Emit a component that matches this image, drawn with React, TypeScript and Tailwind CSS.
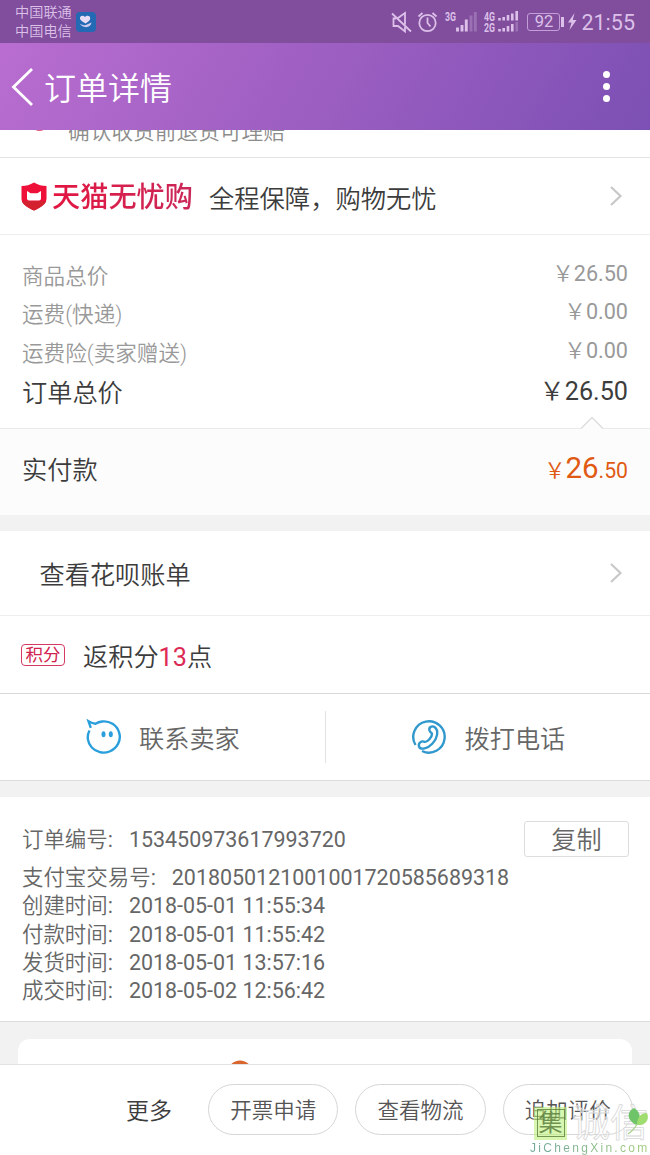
/**
 * 订单详情页
 * 状态栏 + 标题栏 + 订单内容 + 底部操作栏
 */

const prices = [
  { label: '商品总价', value: '26.50' },
  { label: '运费(快递)', value: '0.00' },
  { label: '运费险(卖家赠送)', value: '0.00' },
]

const orderInfo = [
  { label: '支付宝交易号', value: '2018050121001001720585689318' },
  { label: '创建时间', value: '2018-05-01 11:55:34' },
  { label: '付款时间', value: '2018-05-01 11:55:42' },
  { label: '发货时间', value: '2018-05-01 13:57:16' },
  { label: '成交时间', value: '2018-05-02 12:56:42' },
]

const actions = ['开票申请', '查看物流', '追加评价']

export default function App() {
  return (
    <div className="relative flex h-[1155px] w-[650px] flex-col overflow-hidden bg-[#f2f2f2] font-['Roboto','Noto_Sans_CJK_SC',sans-serif] font-[350] text-[#3c3c3c]">
      <StatusBar />
      <TitleBar />
      <div className="flex h-7 shrink-0 items-start overflow-hidden border-b border-[#e4e4e4] bg-white pl-[34px]">
        <span className="-mt-2 h-[9px] w-[11px] shrink-0 rounded-full bg-[#e8617c]" />
        <span className="-mt-[13px] ml-[23px] text-[21.7px] leading-[30px] text-[#8c8c8c]">确认收货前退货可理赔</span>
      </div>
      <GuaranteeRow />
      <PriceSection />
      <div className="mt-4 flex h-[85px] shrink-0 items-center justify-between border-b border-[#eee] bg-white pr-[27px] pl-[39.5px]">
        <span className="mt-[5px] text-[25.2px]">查看花呗账单</span>
        <ChevronRight />
      </div>
      <div className="flex h-[78px] shrink-0 items-center border-b border-[#d8d8d8] bg-white pl-[21px]">
        <span className="flex h-[22px] w-11 items-center justify-center rounded-[4px] border border-[#d43a62] pt-[2px] text-[17.5px] font-normal text-[#d1234f]">
          积分
        </span>
        <span className="mt-[6px] ml-[18px] text-[25.2px]">
          返积分<span className="font-normal text-[#dd2a55]">13</span>点
        </span>
      </div>
      <ContactSection />
      <OrderInfoSection />
      <div className="flex h-[42px] shrink-0 items-end px-[18px]">
        <div className="flex h-[25px] flex-1 items-end overflow-hidden rounded-t-xl bg-white pl-[211px]">
          <svg width="22" height="4" viewBox="0 0 22 4">
            <circle cx="11" cy="13" r="12.5" fill="#d9662e" />
          </svg>
        </div>
      </div>
      <ActionBar />
      <Watermark />
    </div>
  )
}

/**
 * 系统状态栏
 */
function StatusBar() {
  return (
    <div className="flex h-[43px] shrink-0 items-center bg-[#804e9c] pr-[15px] pl-[15px] text-[#dcc0ea]">
      <div className="flex flex-col pt-[1px] text-[14.2px] leading-[19.5px]">
        <span>中国联通</span>
        <span>中国电信</span>
      </div>
      <svg className="ml-1" width="20" height="20" viewBox="0 0 20 20">
        <rect width="20" height="20" rx="4" fill="#2469b4" />
        <path d="M9.5 11.5C5 9 3.8 7.5 4 5.8C4.3 3.5 7.3 3 9 5C10.5 3 14 3.4 14.2 6C14.3 8 13 9.5 9.5 11.5Z" fill="#e6dcf5" />
        <path d="M3.5 11.5C6 13 9 14 11 12.5L15.5 10.5C15 14 11.5 16 8 14.8C6 14 4.5 13 3.5 11.5Z" fill="#cfcbee" />
      </svg>
      <div className="ml-auto flex items-center">
        <svg width="128" height="24" viewBox="0 0 128 24" fill="none" stroke="#dcc0ea" strokeWidth="1.8">
          {/* 静音 */}
          <path d="M1 3.5L20 21.5M7 8L14 3V14.5M5 8.5H2.5V16H7L14 21.5V17" />
          {/* 闹钟 */}
          <circle cx="36.5" cy="13" r="8.2" />
          <path d="M36.5 7.5V13L39.5 16.5M27.5 6.5L31.5 3M41.5 3L45.5 6.5" />
          {/* 信号 */}
          <g strokeWidth="2.9">
            <path d="M66.5 17.5V21.5M71 15V21.5M75.3 9.5V21.5" />
            <path d="M80 5.5V21.5M84.3 2V21.5" opacity=".3" />
          </g>
          <g strokeWidth="2.6">
            <path d="M108.5 8V10.5M112.7 7V10.5M117 5V10.5M121.3 3.5V10.5M125.7 1V10.5" />
            <path d="M108.5 19V21.5M112.7 18V21.5M117 16V21.5M121.3 14V21.5" />
            <path d="M125.7 12V21.5" opacity=".3" />
          </g>
          <g fill="#dcc0ea" stroke="none" fontSize="12" fontWeight="700" fontFamily="Roboto">
            <text x="54" y="10.5" textLength="11" lengthAdjust="spacingAndGlyphs">3G</text>
            <text x="93" y="10.5" textLength="11" lengthAdjust="spacingAndGlyphs">4G</text>
            <text x="93" y="21.5" textLength="11" lengthAdjust="spacingAndGlyphs">2G</text>
          </g>
        </svg>
        <div className="ml-2 flex h-[18px] w-[33px] items-center justify-center rounded-[3px] border border-[#c39ed8] pt-[2px] text-[16.5px] font-normal">92</div>
        <span className="ml-[1px] h-[10px] w-[3px] bg-[#dcc0ea]" />
        <svg className="ml-1" width="9" height="19" viewBox="0 0 9 19" fill="#dcc0ea">
          <path d="M6.5 1L0 10.5H3.5L1.5 18L8.5 8H4.8Z" />
        </svg>
        <span className="mt-[3px] ml-1 text-[21.5px] font-normal">21:55</span>
      </div>
    </div>
  )
}

function TitleBar() {
  return (
    <div className="flex h-[87px] shrink-0 items-center bg-[linear-gradient(120deg,#b96dd0_0%,#9c5ec1_50%,#7c50b4_100%)] pr-10 pl-[11px] text-white">
      <svg width="24" height="40" viewBox="0 0 24 40" fill="none" stroke="currentColor" strokeWidth="2.8">
        <path d="M21 2L2.5 20L21 38" />
      </svg>
      <h1 className="mt-[4px] ml-[9px] text-[32px] font-[350]">订单详情</h1>
      <div className="ml-auto flex flex-col gap-[5px]">
        <span className="size-[7px] rounded-full bg-white" />
        <span className="size-[7px] rounded-full bg-white" />
        <span className="size-[7px] rounded-full bg-white" />
      </div>
    </div>
  )
}

function ChevronRight() {
  return (
    <svg width="14" height="22" viewBox="0 0 14 22" fill="none" stroke="#c8c8c8" strokeWidth="2.2">
      <path d="M2 2L11.5 11L2 20" />
    </svg>
  )
}

/**
 * 天猫无忧购
 */
function GuaranteeRow() {
  return (
    <div className="flex h-[77px] shrink-0 items-center border-b border-[#eee] bg-white pr-[27px] pl-[21px]">
      <svg width="26" height="29" viewBox="0 0 26 29">
        <path d="M13 .5C17 3 21 4 25.5 4V17C25.5 22 18 26.500 13 28.500C8 26.500 .5 22 .5 17V4C5 4 9 3 13 .5Z" fill="#ee1038" />
        <path d="M.8 19H25.200C24 23 17.500 26.700 13 28.500C8.500 26.700 2 23 .8 19Z" fill="#d3212f" />
        <path d="M6 9C8 10.200 9 11.300 10 11.300H16C17 11.300 18 10.200 20 9V16.500Q20 18.500 18 18.500H8Q6 18.500 6 16.500Z" fill="#fff" />
      </svg>
      <span className="mt-[4px] ml-[5px] bg-linear-to-r from-[#e31440] to-[#c92758] bg-clip-text text-[28.2px] font-medium text-transparent">天猫无忧购</span>
      <span className="mt-[7px] ml-[16px] text-[25.3px]">全程保障，购物无忧</span>
      <span className="ml-auto">
        <ChevronRight />
      </span>
    </div>
  )
}

/**
 * 价格明细与实付款
 */
function PriceSection() {
  return (
    <>
      <div className="flex h-[193px] shrink-0 flex-col bg-white px-[22px] pt-[20px]">
        {prices.map((item) => (
          <div key={item.label} className="flex h-[38.5px] items-center justify-between text-[21.6px] text-[#999]">
            <span className="mt-[5px]">{item.label}</span>
            <span className="-mt-[1px]">
              ￥<span className="font-normal">{item.value}</span>
            </span>
          </div>
        ))}
        <div className="flex h-[42px] items-center justify-between text-[25.2px]">
          <span className="mt-[5px]">订单总价</span>
          <span>
            ￥<span className="font-normal">26.50</span>
          </span>
        </div>
      </div>
      <div className="relative flex h-[87px] shrink-0 items-center justify-between border-t border-[#e9e9e9] bg-[#fcfcfc] px-[22px]">
        <svg className="absolute -top-[13px] left-[580px]" width="24" height="14" viewBox="0 0 24 14">
          <path d="M1 13L12 1.5L23 13V14H1Z" fill="#fcfcfc" />
          <path d="M1 12.5L12 1.5L23 12.5" fill="none" stroke="#dedede" strokeWidth="1.5" />
        </svg>
        <span className="-mt-[3px] text-[25.2px]">实付款</span>
        <span className="-mt-[7px] text-[21.2px] text-[#e05a14]">
          ￥<span className="text-[29.5px] font-normal">26</span>
          <span className="font-normal">.50</span>
        </span>
      </div>
    </>
  )
}

function ContactSection() {
  return (
    <div className="flex h-[87px] shrink-0 items-center border-b border-[#dcdcdc] bg-white text-[25.2px] text-[#666]">
      <div className="flex h-[52px] w-[326px] items-center border-r border-[#e2e2e2] pl-[86px]">
        <svg width="36" height="36" viewBox="0 0 36 36" fill="none" stroke="#2a9fdc" strokeWidth="2.4">
          <path d="M3.5 11.5C.5 17 1.5 24 5.8 28.5C10 33 17 35 23.5 32.5C31 29.500 35.500 21.500 33.200 13.800C31 6 23.500 1.500 16 2.500C13.500 2.800 11.500 3.600 9.500 4.800C7 4.500 5 3.600 2.500 2.200L4.800 8.800" />
          <ellipse cx="17.5" cy="15.3" rx="2" ry="3" fill="#2a9fdc" stroke="none" />
          <ellipse cx="24.8" cy="15.3" rx="2" ry="3" fill="#2a9fdc" stroke="none" />
        </svg>
        <span className="mt-[6px] ml-[17px]">联系卖家</span>
      </div>
      <div className="flex items-center pl-[85px]">
        <svg width="36" height="36" viewBox="0 0 36 36" fill="none" stroke="#3098cc" strokeWidth="2.4">
          <path d="M4.5 26A15.7 15.7 0 1 1 11 32" />
          <path d="M18.5 11.5C17.5 8 21 6.500 23.500 8C28.500 11.500 26 20 21.500 24.500C17 29.500 9.500 31.500 8 27.500C7 24 10.500 21.500 13.500 22.800C16.500 23.500 21 18 21 15C21 13.500 19 13.500 18.500 11.500Z" />
        </svg>
        <span className="mt-[6px] ml-[17.5px]">拨打电话</span>
      </div>
    </div>
  )
}

/**
 * 订单编号与时间信息
 */
function OrderInfoSection() {
  return (
    <div className="mt-4 flex h-[225px] shrink-0 flex-col border-b border-[#dcdcdc] bg-white px-[22px] pt-[24px] text-[21.45px] text-[#666]">
      <div className="-mr-[1px] flex h-9 items-center justify-between">
        <span className="mt-[3px] whitespace-pre">
          订单编号<span className="font-normal">:{'   '}153450973617993720</span>
        </span>
        <button className="flex h-9 w-[105px] items-center justify-center rounded-[3px] border border-[#ddd] pt-1 text-[25.2px]">复制</button>
      </div>
      <div className="mt-[7px] flex flex-col">
        {orderInfo.map((item) => (
          <span key={item.label} className="h-[28.3px] leading-[28.3px] whitespace-pre">
            {item.label}
            <span className="font-normal">:{'   '}{item.value}</span>
          </span>
        ))}
      </div>
    </div>
  )
}

/**
 * 底部操作栏
 */
function ActionBar() {
  return (
    <div className="flex h-[91px] shrink-0 items-center justify-end gap-[17px] border-t border-[#e2e2e2] bg-white pr-[17px] text-[21.5px] text-[#555]">
      <span className="mt-[5px] mr-[19px] text-[23px] text-[#3c3c3c]">更多</span>
      {actions.map((label) => (
        <button key={label} className="-mt-[2px] flex h-[51px] w-[130.3px] items-center justify-center rounded-full border border-[#d6d6d6] pt-[5px]">
          {label}
        </button>
      ))}
    </div>
  )
}

// 右下角水印
function Watermark() {
  return (
    <div className="pointer-events-none absolute top-[1105px] left-[530px] w-[120px]">
      <div className="flex h-[36px] items-center">
        <span className="ml-1 flex size-[33px] shrink-0 items-center justify-center bg-[#bdf07a]/60">
          <span className="flex size-[28px] items-center justify-center border border-[#5c7d3c]/80 text-[24px] leading-none font-normal text-[#5c8040]/85">集</span>
        </span>
        <span className="ml-[5px] text-[38px] leading-none font-normal whitespace-nowrap text-white/50 [-webkit-text-stroke:0.8px_#d8d8d8]">诚信</span>
      </div>
      <svg className="absolute top-[2px] left-[97px]" width="22" height="28" viewBox="0 0 22 28">
        <path d="M10 18C0 14 -1 5 7 1C14 5 14 12 10 18Z" fill="#6fc368" />
        <path d="M10 18C10 10 14 6 20 6C23 13 18 19 10 18Z" fill="#a0dd70" />
        <path d="M10 17Q7 23 1 27" fill="none" stroke="#a5d488" strokeWidth="1.2" />
      </svg>
      <div className="bg-linear-to-r from-[#6fa89c] to-[#a3cc78] bg-clip-text font-['Liberation_Sans',sans-serif] text-[12px] leading-[15px] font-normal tracking-[2.3px] whitespace-nowrap text-transparent">JiChengXin.com</div>
    </div>
  )
}
